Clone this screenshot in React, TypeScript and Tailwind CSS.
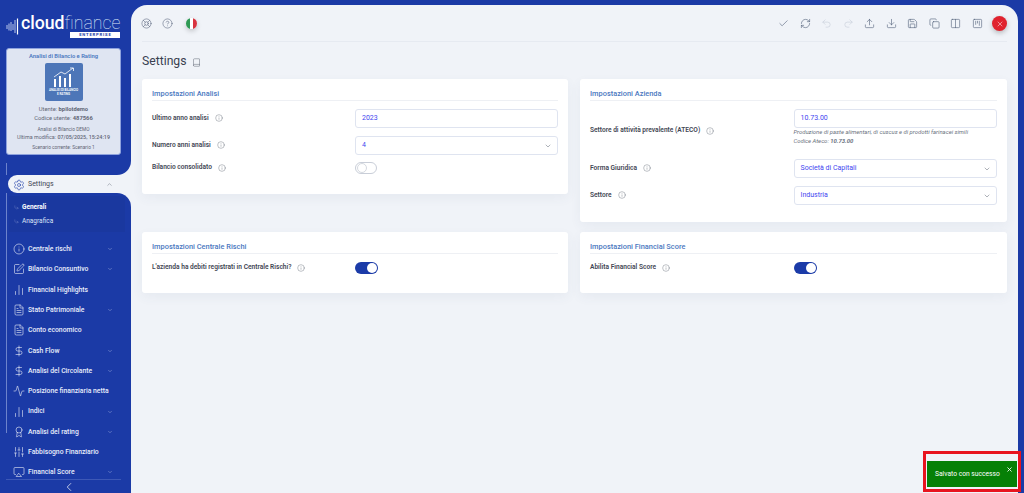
import React from "react";
import {
  LifeBuoy, CircleHelp, Check, RefreshCw, Undo2, Redo2, Upload, Download, Save, Copy, Columns2, SquareKanban, X,
  Book, Settings, Info, SquarePen, ChartNoAxesColumn, FileText, DollarSign, Activity, Award, SlidersVertical,
  Airplay, CornerDownRight, ChevronDown, ChevronUp, ChevronLeft,
} from "lucide-react";

const menu: { label: string; Icon: any; chev?: boolean }[] = [
  { label: "Centrale rischi", Icon: Info, chev: true },
  { label: "Bilancio Consuntivo", Icon: SquarePen, chev: true },
  { label: "Financial Highlights", Icon: ChartNoAxesColumn },
  { label: "Stato Patrimoniale", Icon: FileText, chev: true },
  { label: "Conto economico", Icon: FileText },
  { label: "Cash Flow", Icon: DollarSign, chev: true },
  { label: "Analisi del Circolante", Icon: DollarSign, chev: true },
  { label: "Posizione finanziaria netta", Icon: Activity },
  { label: "Indici", Icon: ChartNoAxesColumn, chev: true },
  { label: "Analisi del rating", Icon: Award, chev: true },
  { label: "Fabbisogno Finanziario", Icon: SlidersVertical },
  { label: "Financial Score", Icon: Airplay, chev: true },
];

function Label({ children }: { children: React.ReactNode }) {
  return (
    <div className="flex items-center gap-[6px] text-[6.6px] font-semibold text-[#3f4654]">
      <span>{children}</span>
      <Info size={8} strokeWidth={1.2} className="text-[#5d6472]" />
    </div>
  );
}

function Field({ value, select }: { value: string; select?: boolean }) {
  return (
    <div className="flex h-[19px] w-full items-center justify-between rounded-[3px] border border-[#dfe4f0] bg-white pl-[6px] pr-[5px] text-[7px] text-[#3f46f0]">
      <span>{value}</span>
      {select && <ChevronDown size={8} strokeWidth={1.5} className="text-[#5d6472]" />}
    </div>
  );
}

function Toggle({ on }: { on?: boolean }) {
  return on ? (
    <div className="flex h-[12px] w-[23px] items-center justify-end rounded-full bg-[#1b3ba8] pr-[1px]">
      <div className="h-[10px] w-[10px] rounded-full bg-white" />
    </div>
  ) : (
    <div className="flex h-[12px] w-[22px] items-center rounded-full border border-[#c9ced8] bg-white pl-[1px]">
      <div className="h-[10px] w-[10px] rounded-full border border-[#d5d9e0] bg-white" />
    </div>
  );
}

function Card({ title, children, className }: { title: string; children: React.ReactNode; className: string }) {
  return (
    <div className={`rounded-[3px] bg-white px-[10px] pt-[10px] shadow-[0_4px_12px_rgba(60,80,120,0.06)] ${className}`}>
      <div className="border-b border-[#eef0f4] pb-[2px] text-[7.4px] font-medium leading-[9px] text-[#4a78c0]">{title}</div>
      {children}
    </div>
  );
}

function Row({ label, children, className = "" }: { label: string; children: React.ReactNode; className?: string }) {
  return (
    <div className={`grid grid-cols-2 items-center ${className}`}>
      <Label>{label}</Label>
      {children}
    </div>
  );
}

function Sidebar() {
  return (
    <aside className="relative flex h-[493px] w-[131px] shrink-0 flex-col overflow-hidden bg-[#f0f3f8] text-white">
      <div className="flex h-[175px] shrink-0 flex-col rounded-br-[14px] bg-[#1b3aa6] px-[6px]">
        <div className="mt-[14px] flex h-[24px] shrink-0 items-center gap-[2px]">
          <svg width="13" height="17" viewBox="0 0 13 17" className="shrink-0">
            <g stroke="#b9c6ea" strokeWidth="1">
              <path d="M1 7v4M3 5.500v7M5 4v9" />
              <path d="M7 6v6" />
              <path d="M9 2v13" />
            </g>
            <path d="M11.500 0.500v16" stroke="#ffffff" strokeWidth="1.200" />
          </svg>
          <div className="flex flex-col items-end">
            <div className="text-[17.700px] leading-[16px]">
              <span className="font-medium">cloud</span>
              <span className="font-thin text-[#dfe6f7]">finance</span>
            </div>
            <div className="mt-[1px] h-[6px] w-[50px] bg-white text-center text-[4.200px] font-bold leading-[6px] tracking-[0.8px] text-[#1b3aa6]">
              ENTERPRISE
            </div>
          </div>
        </div>
        <div className="mt-[10px] flex h-[107px] w-[115px] shrink-0 flex-col items-center rounded-[3px] border border-[#8ea2dd] bg-[#dfe5f2] pt-[3px] text-[#5f6675]">
          <div className="text-[5.800px] font-semibold leading-[9px] text-[#4a78c0]">Analisi di Bilancio e Rating</div>
          <div className="mt-[2px] flex h-[38px] w-[38px] flex-col items-center justify-center rounded-[2px] bg-[#4d76b8]">
            <svg width="24" height="20" viewBox="0 0 24 20" fill="none" stroke="#fff">
              <path d="M2 10 9 5l4 2 8-6" strokeWidth="0.800" />
              <path d="M18 1h3.500v3" strokeWidth="0.800" />
              <path d="M3 12v8M8 9v11M13 11v9M18 7v13" strokeWidth="2" />
            </svg>
            <div className="mt-[2px] text-center text-[3px] font-semibold leading-[3.600px] text-white">
              ANALISI DI BILANCIO
              <br />E RATING
            </div>
          </div>
          <div className="mt-[4px] text-[5.800px] leading-[9px]">
            Utente: <span className="font-bold">bpilotdemo</span>
          </div>
          <div className="text-[5.800px] leading-[9px]">
            Codice utente: <span className="font-bold">487566</span>
          </div>
          <div className="mt-[3px] text-[4.800px] leading-[7.500px]">Analisi di Bilancio DEMO</div>
          <div className="text-[5.400px] leading-[7.500px]">
            Ultima modifica: <span className="font-medium">07/05/2025, 15:24:19</span>
          </div>
          <div className="mt-[3px] text-[4.800px] leading-[7.500px]">Scenario corrente: Scenario 1</div>
        </div>
      </div>

      <div className="flex h-[18px] shrink-0 items-center bg-[#1b3aa6] pl-[8px]">
        <div className="flex h-[18px] w-full items-center rounded-l-full bg-[#f0f3f8] pl-[5px] pr-[18px] pt-[1px] text-[7px] text-[#3f4654]">
          <Settings size={12} strokeWidth={1.200} className="text-[#1b3aa6]" />
          <span className="ml-[3px] flex-1">Settings</span>
          <ChevronUp size={7} strokeWidth={1.500} className="text-[#5d6472]" />
        </div>
      </div>

      <div className="flex min-h-0 flex-1 flex-col rounded-tr-[14px] bg-[#1b3aa6] pl-[6px]">
        <div className="ml-[3px] mt-[3px] flex h-[36px] w-[116px] shrink-0 flex-col justify-center gap-[5px] bg-[#1a389f] pl-[5px] text-[6.500px] leading-[9px]">
          <div className="flex items-center gap-[3px] font-bold">
            <CornerDownRight size={5} strokeWidth={1.200} className="text-[#a9b8e6]" />
            Generali
          </div>
          <div className="flex items-center gap-[3px] text-[#dde4f7]">
            <CornerDownRight size={5} strokeWidth={1.200} className="text-[#a9b8e6]" />
            Anagrafica
          </div>
        </div>
        <nav className="mt-[7px] flex min-h-0 flex-1 flex-col overflow-hidden pl-[7px]">
          {menu.map(({ label, Icon, chev }) => (
            <div key={label} className="flex h-[20.300px] shrink-0 items-center pr-[18px] text-[6.800px] font-medium text-[#e9eefb]">
              <Icon size={12} strokeWidth={1.100} className="shrink-0 text-white" />
              <span className="ml-[3px] flex-1 whitespace-nowrap">{label}</span>
              {chev && <ChevronDown size={6} strokeWidth={1.500} className="text-[#c2cded]" />}
            </div>
          ))}
        </nav>
        <div className="mr-[10px] flex h-[14px] shrink-0 items-start justify-center border-t border-[#3d58b6] pl-[10px]">
          <ChevronLeft size={14} strokeWidth={1.200} />
        </div>
      </div>
      <div className="absolute left-[6px] top-[163px] h-[12px] w-px bg-[#6d83cc]" />
      <div className="absolute left-[6px] top-[193px] h-[240px] w-px bg-[#6d83cc]" />
    </aside>
  );
}

function Main() {
  const right = [Check, RefreshCw, Undo2, Redo2, Upload, Download, Save, Copy, Columns2, SquareKanban];
  return (
    <main className="mr-[6px] mt-[5px] flex flex-1 flex-col rounded-t-[16px] bg-[#f0f3f8] px-[11px]">
      <header className="flex h-[37px] shrink-0 items-center border-b border-[#e6eaf1] pt-[1px]">
        <LifeBuoy size={11} strokeWidth={1.200} className="ml-[-1px] text-[#56617a]" />
        <CircleHelp size={11} strokeWidth={1.200} className="ml-[10px] text-[#56617a]" />
        <div className="ml-[13px] flex h-[11px] w-[11px] overflow-hidden rounded-full shadow-[0_2px_5px_rgba(0,0,0,0.2)]">
          <div className="flex-1 bg-[#2f9a55]" />
          <div className="flex-1 bg-white" />
          <div className="flex-1 bg-[#d8333f]" />
        </div>
        <div className="ml-auto flex items-center">
          {right.map((I, i) => (
            <I
              key={i}
              size={11}
              strokeWidth={1.300}
              className={`mr-[10.500px] ${i === 2 || i === 3 ? "text-[#c5ccd8]" : "text-[#4f5e78]"}`}
            />
          ))}
          <div className="ml-[-1px] flex h-[15px] w-[15px] items-center justify-center rounded-full bg-[#e0222e] text-white shadow-[0_2px_5px_rgba(0,0,0,0.25)]">
            <X size={8} strokeWidth={1.500} />
          </div>
        </div>
      </header>

      <h1 className="mt-[11px] flex h-[17px] shrink-0 items-center gap-[5px] text-[12.200px] font-normal text-[#3a4150]">
        Settings
        <Book size={9} strokeWidth={1.300} className="mt-[2px] text-[#5d6472]" />
      </h1>

      <div className="mt-[9px] grid grid-cols-[426px_427px] items-start gap-x-[12px] gap-y-[10px]">
        <Card title="Impostazioni Analisi" className="h-[115px]">
          <Row label="Ultimo anno analisi" className="mt-[8px]">
            <Field value="2023" />
          </Row>
          <Row label="Numero anni analisi" className="mt-[8px]">
            <Field value="4" select />
          </Row>
          <Row label="Bilancio consolidato" className="mt-[7px]">
            <Toggle />
          </Row>
        </Card>
        <Card title="Impostazioni Azienda" className="h-[143px]">
          <Row label="Settore di attività prevalente (ATECO)" className="mt-[8px]">
            <div className="h-[44px]">
              <Field value="10.73.00" />
              <div className="text-[5.900px] italic leading-[9px] text-[#6b7280]">
                Produzione di paste alimentari, di cuscus e di prodotti farinacei simili
                <br />
                Codice Ateco: <span className="font-bold">10.73.00</span>
              </div>
            </div>
          </Row>
          <Row label="Forma Giuridica" className="mt-[6px]">
            <Field value="Società di Capitali" select />
          </Row>
          <Row label="Settore" className="mt-[8px]">
            <Field value="Industria" select />
          </Row>
        </Card>
        <Card title="Impostazioni Centrale Rischi" className="h-[61px]">
          <Row label="L'azienda ha debiti registrati in Centrale Rischi?" className="mt-[8px]">
            <Toggle on />
          </Row>
        </Card>
        <Card title="Impostazioni Financial Score" className="h-[61px]">
          <Row label="Abilita Financial Score" className="mt-[8px]">
            <Toggle on />
          </Row>
        </Card>
      </div>
    </main>
  );
}

export default function App() {
  return (
    <div className="relative flex h-[493px] w-[1024px] overflow-hidden bg-[#1b3aa6] font-['Roboto',sans-serif]">
      <Sidebar />
      <Main />
      <div className="absolute left-[923px] top-[451px] flex h-[41px] w-[98px] items-end border-[3px] border-[#e8141f] pb-[2px] pl-[1px]">
        <div className="relative flex h-[26px] w-[90px] items-center bg-[#068006] pl-[8px] text-[6.700px] text-white">
          Salvato con successo
          <X size={7} strokeWidth={3} className="absolute right-[4px] top-[5px]" />
        </div>
      </div>
    </div>
  );
}
